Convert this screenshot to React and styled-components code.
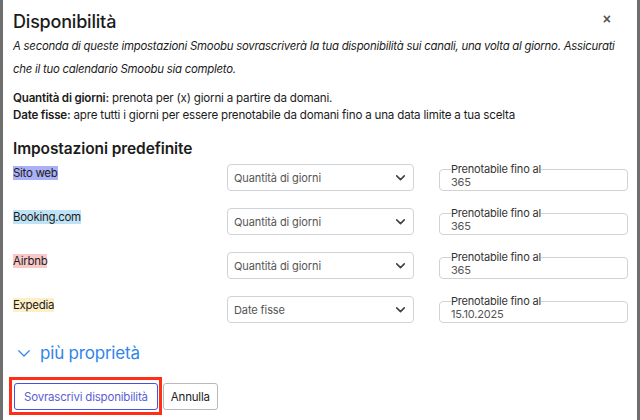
import React from "react";
import styled, { createGlobalStyle } from "styled-components";

const GlobalStyle = createGlobalStyle`
  html, body {
    margin: 0;
    padding: 0;
    background: #6f6f6f;
    font-family: Inter, "Noto Sans", sans-serif;
  }
`;

const Modal = styled.div`
  margin: 0 3px;
  min-height: 420px;
  background: #fff;
  padding: 0 10px;
  box-sizing: border-box;
  color: #1c1c1c;
`;

const Header = styled.div`
  display: flex;
  justify-content: space-between;
  align-items: center;
  height: 27px;
  padding-top: 8px;
`;

const Title = styled.h2`
  margin: 0;
  font-size: 18px;
  font-weight: 500;
  letter-spacing: -0.2px;
`;

const Close = styled.button`
  border: none;
  background: none;
  color: #555;
  font-size: 14px;
  font-weight: 600;
  padding: 0;
  margin: -6px 16px 0 0;
  cursor: pointer;
`;

const Intro = styled.p`
  margin: 0;
  font-size: 11.4px;
  font-style: italic;
  line-height: 23px;
  letter-spacing: -0.25px;
  white-space: nowrap;
`;

const Defs = styled.div`
  margin-top: 9px;
  font-size: 11.6px;
  line-height: 17px;
  letter-spacing: -0.2px;

  b {
    font-weight: 600;
  }
`;

const Section = styled.h3`
  margin: 15px 0 6px;
  font-size: 15.5px;
  line-height: 19px;
  font-weight: 600;
  letter-spacing: -0.1px;
`;

const Rows = styled.div`
  display: grid;
  grid-template-columns: 189px 187px 189px;
  column-gap: 25px;
  row-gap: 17px;
`;

const Label = styled.div`
  align-self: start;
  font-size: 11.5px;
  line-height: 14px;
  margin-top: 2px;

  span {
    background: ${(p) => p.$tint};
    letter-spacing: -0.3px;
  }
`;

const Select = styled.div`
  height: 27px;
  border: 1px solid #cfd3d8;
  border-radius: 4px;
  box-sizing: border-box;
  display: flex;
  align-items: center;
  justify-content: space-between;
  padding: 0 6px 0 6px;
  font-size: 11px;
  color: #555;
  letter-spacing: -0.1px;
`;

const Field = styled.fieldset`
  margin: 0;
  height: 27px;
  min-width: 0;
  border: 1px solid #cfd3d8;
  border-radius: 4px;
  box-sizing: border-box;
  padding: 0 11px;
  font-size: 11px;
  letter-spacing: -0.2px;

  legend {
    padding: 0;
    color: #333;
    line-height: 11px;
  }

  div {
    color: #555;
    line-height: 13px;
    margin-top: 1px;
  }
`;

const More = styled.div`
  display: flex;
  align-items: center;
  gap: 7px;
  margin: 20px 0 0 2px;
  color: #2f86ea;
  font-size: 17px;
  letter-spacing: -0.2px;
  height: 20px;
`;

const Actions = styled.div`
  display: flex;
  gap: 5px;
  margin: 20px 0 0 1px;
`;

const Button = styled.button`
  position: relative;
  height: 27px;
  padding: 0 ${(p) => (p.$primary ? "9px" : "7px")};
  border-radius: 3px;
  background: #fff;
  font-family: inherit;
  font-size: 11.5px;
  letter-spacing: -0.2px;
  border: 1px solid ${(p) => (p.$primary ? "#4a52dc" : "#b9b9b9")};
  color: ${(p) => (p.$primary ? "#5a60d6" : "#222")};

  &::after {
    content: "";
    display: ${(p) => (p.$marked ? "block" : "none")};
    position: absolute;
    inset: -7px -5px -6px -6px;
    border: 3px solid #ff2e17;
    pointer-events: none;
  }
`;

const Chevron = ({ size = 12, color = "currentColor", width = 2 }) => (
  <svg width={size} height={size} viewBox="0 0 24 24" fill="none" stroke={color} strokeWidth={width} strokeLinecap="round" strokeLinejoin="round">
    <path d="M5 9l7 7 7-7" />
  </svg>
);

const channels = [
  { name: "Sito web", tint: "#aab0f6", mode: "Quantità di giorni", value: "365" },
  { name: "Booking.com", tint: "#bfe3f6", mode: "Quantità di giorni", value: "365" },
  { name: "Airbnb", tint: "#f8c9c9", mode: "Quantità di giorni", value: "365" },
  { name: "Expedia", tint: "#fdf0c7", mode: "Date fisse", value: "15.10.2025" },
];

export default function App() {
  return (
    <>
      <GlobalStyle />
      <Modal>
        <Header>
          <Title>Disponibilità</Title>
          <Close>×</Close>
        </Header>
        <Intro>
          A seconda di queste impostazioni Smoobu sovrascriverà la tua disponibilità sui canali, una volta al giorno. Assicurati
          <br />
          che il tuo calendario Smoobu sia completo.
        </Intro>
        <Defs>
          <div><b>Quantità di giorni:</b> prenota per (x) giorni a partire da domani.</div>
          <div><b>Date fisse:</b> apre tutti i giorni per essere prenotabile da domani fino a una data limite a tua scelta</div>
        </Defs>
        <Section>Impostazioni predefinite</Section>
        <Rows>
          {channels.map((c) => (
            <React.Fragment key={c.name}>
              <Label $tint={c.tint}><span>{c.name}</span></Label>
              <Select>
                {c.mode}
                <Chevron size={13} color="#444" width={3} />
              </Select>
              <Field>
                <legend>Prenotabile fino al</legend>
                <div>{c.value}</div>
              </Field>
            </React.Fragment>
          ))}
        </Rows>
        <More>
          <Chevron size={18} width={1.6} />
          più proprietà
        </More>
        <Actions>
          <Button $primary $marked>Sovrascrivi disponibilità</Button>
          <Button>Annulla</Button>
        </Actions>
      </Modal>
    </>
  );
}
